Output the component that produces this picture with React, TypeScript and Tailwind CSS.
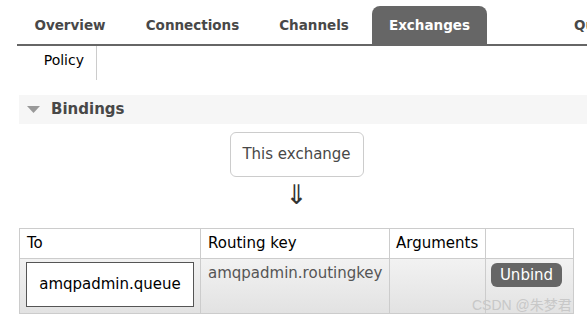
import React from 'react'

const tabs = [
  { label: 'Overview', w: 'w-[106px] justify-center' },
  { label: 'Connections', w: 'w-[127px] justify-center' },
  { label: 'Channels', w: 'w-[104px] justify-center' },
  { label: 'Exchanges', w: 'w-[115px] justify-center', active: true },
  { label: 'Queues', w: 'w-[160px] pl-[81px]' },
]

const App = () => {
  return (
    <main className="relative w-[587px] h-[320px] overflow-hidden bg-white text-[#333] font-['DejaVu_Sans',sans-serif]">
      {/* tabs */}
      <div className="pl-[17px] pt-[6px]">
        <div className="flex gap-[6px] w-[700px] border-b-2 border-[#666] h-[40px]">
          {tabs.map((t) => (
            <div
              key={t.label}
              className={`${t.w} shrink-0 flex items-center text-[13.5px] font-bold rounded-t-[8px] ${
                t.active ? 'bg-[#666] text-white' : 'text-[#484848]'
              }`}
            >
              {t.label}
            </div>
          ))}
        </div>
        <div className="flex">
          <div className="w-[80px] h-[34px] border-r border-[#ccc] flex justify-end pr-[12px] pt-[4px] text-[14px] text-black">
            Policy
          </div>
        </div>
      </div>

      {/* bindings */}
      <div className="ml-[19px] mt-[15px] h-[29px] bg-[#f6f6f6] flex items-center gap-[11px] pl-[8px]">
        <svg width="13" height="7" viewBox="0 0 13 7">
          <polygon points="0,0 13,0 6.5,7" fill="#999" />
        </svg>
        <span className="text-[15px] font-bold text-[#484848]">Bindings</span>
      </div>

      <div className="ml-[19px] w-[555px] flex flex-col items-center">
        <div className="mt-[8px] w-[134px] h-[45px] border border-[#ccc] rounded-[6px] flex items-center justify-center text-[15px] text-[#484848]">
          This exchange
        </div>
        <div className="h-[51px] pt-[4px] text-[27px] leading-[28px] text-[#333]">⇓</div>
      </div>

      <table className="ml-[19px] w-[555px] border-collapse text-[15px]">
        <thead>
          <tr className="h-[30px] text-left text-black">
            <th className="w-[181px] border border-[#ccc] font-normal pl-[7px]">To</th>
            <th className="w-[189px] border border-[#ccc] font-normal pl-[7px]">Routing key</th>
            <th className="w-[96px] border border-[#ccc] font-normal pl-[6px]">Arguments</th>
            <th className="border border-[#ccc]"></th>
          </tr>
        </thead>
        <tbody>
          <tr className="h-[55px] bg-gradient-to-b from-[#f2f2f2] to-[#e2e2e2] align-top">
            <td className="border border-[#ccc] px-[6px] pt-[3px]">
              <div className="h-[45px] w-[168px] bg-white border border-[#555] flex items-center justify-center text-black">
                amqpadmin.queue
              </div>
            </td>
            <td className="border border-[#ccc] pl-[7px] pt-[3px] text-[#555]">amqpadmin.routingkey</td>
            <td className="border border-[#ccc]"></td>
            <td className="border border-[#ccc] pt-[4px] pl-[5px]">
              <span className="inline-flex items-center justify-center w-[71px] h-[24px] rounded-[6px] bg-[#666] text-white">
                Unbind
              </span>
            </td>
          </tr>
        </tbody>
      </table>

      <div className="absolute left-[472px] top-[295px] text-[14px] text-[#c8c8c8] font-['Liberation_Sans','Noto_Sans_CJK_SC',sans-serif]">
        CSDN @朱梦君
      </div>
    </main>
  )
}

export default App
